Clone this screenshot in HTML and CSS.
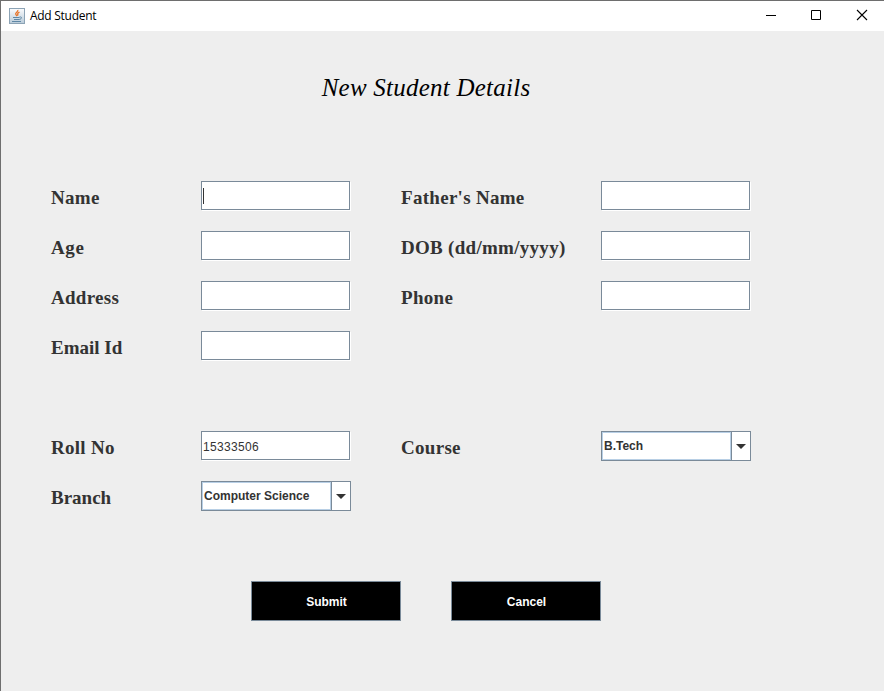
FILE: index.html
```html
<!DOCTYPE html>
<html lang="en">
<head>
<meta charset="utf-8">
<title>Add Student</title>
<link rel="stylesheet" href="styles.css">
</head>
<body>
<div class="window">
  <header class="titlebar">
    <svg class="app-icon" width="16" height="16" viewBox="0 0 16 16">
      <defs><linearGradient id="tile" x1="0" y1="0" x2="0" y2="1"><stop offset="0" stop-color="#fbfcfd"/><stop offset="1" stop-color="#b9cbd9"/></linearGradient></defs>
      <rect x=".5" y=".5" width="15" height="15" fill="url(#tile)" stroke="#8ca3b5"/>
      <path d="M8.800 2c.6 2-3 2.700-2 4.500l1.200 1.500M10.500 4.200c-1.800.8-2.500 1.700-1.300 3.300" fill="none" stroke="#e8752a" stroke-width="1.300"/>
      <path d="M4 9.500h6.500M5 11.500h5M3 13.500h9M10.500 9c3-.5 2.500 2-.3 2.500" fill="none" stroke="#5f87a5"/>
    </svg>
    <span class="caption">Add Student</span>
    <div class="controls">
      <svg width="46" height="30" viewBox="0 0 46 30"><path d="M18 14.500h10" stroke="#000"/></svg>
      <svg width="46" height="30" viewBox="0 0 46 30"><path d="M17.500 9.500h9v9h-9z" fill="none" stroke="#000"/></svg>
      <svg width="46" height="30" viewBox="0 0 46 30"><path d="M17 9l10 10M27 9l-10 10" stroke="#000" stroke-width="1.100"/></svg>
    </div>
  </header>
  <main class="content">
    <h1 class="heading">New Student Details</h1>
    <div class="form">
      <span class="label">Name</span><div class="field"><i class="caret"></i></div>
      <span class="label">Father's Name</span><div class="field"></div>
      <span class="label loose">Age</span><div class="field"></div>
      <span class="label">DOB (dd/mm/yyyy)</span><div class="field"></div>
      <span class="label">Address</span><div class="field"></div>
      <span class="label">Phone</span><div class="field"></div>
      <span class="label tight">Email Id</span><div class="field"></div>
    </div>
    <div class="form course">
      <span class="label">Roll No</span><div class="field">15333506</div>
      <span class="label">Course</span>
      <div class="combo"><span class="value">B.Tech</span><span class="drop"><svg width="10" height="5" viewBox="0 0 10 5"><path d="M0 0h10L5 5z" fill="#333"/></svg></span></div>
      <span class="label tight">Branch</span>
      <div class="combo"><span class="value">Computer Science</span><span class="drop"><svg width="10" height="5" viewBox="0 0 10 5"><path d="M0 0h10L5 5z" fill="#333"/></svg></span></div>
    </div>
    <div class="actions">
      <button class="button">Submit</button>
      <button class="button">Cancel</button>
    </div>
  </main>
</div>
</body>
</html>
```
FILE: styles.css
```css
* { box-sizing: border-box; }
body { margin: 0; }
.window {
  width: 884px;
  height: 691px;
  overflow: hidden;
  background: #eee;
  border-top: 1px solid #6e6e6e;
  border-left: 1px solid #6e6e6e;
}
.titlebar {
  display: flex;
  align-items: center;
  height: 30px;
  padding-left: 8px;
  background: #fff;
}
.app-icon { margin-top: -1px; }
.caption {
  margin-left: 5px;
  font: 12px/16px "Open Sans", sans-serif;
  letter-spacing: -0.28px;
  color: #000;
}
.controls { display: flex; margin-left: auto; margin-right: -2px; }
.content { padding-left: 50px; }
.heading {
  width: 750px;
  height: 50px;
  margin: 32px 0 0;
  text-align: center;
  font: italic 25px/50px "Liberation Serif", serif;
  letter-spacing: 0.24px;
  color: #000;
}
.form {
  display: grid;
  grid-template-columns: 150px 200px 200px 150px;
  grid-auto-rows: 30px;
  row-gap: 20px;
  margin-top: 68px;
}
.course { margin-top: 70px; }
.label {
  font: bold 19px/34px "Liberation Serif", serif;
  letter-spacing: 0.29px;
  color: #333;
  white-space: nowrap;
}
.loose { letter-spacing: 0.6px; }
.tight { letter-spacing: 0; }
.field {
  display: flex;
  width: 149px;
  height: 29px;
  padding-left: 1px;
  border: 1px solid #7a8a99;
  background: #fff;
  box-shadow: 1px 1px 0 #fff;
  font: 12px/30px "Liberation Sans", sans-serif;
  letter-spacing: 0.33px;
  color: #333;
}
.caret { width: 1px; height: 16px; margin-top: 6px; background: #333; }
.combo {
  display: flex;
  width: 150px;
  height: 30px;
  border: 1px solid #7a8a99;
  background: #fff;
}
.value {
  width: 129px;
  border: 1px solid #b8cfe5;
  padding-left: 1px;
  font: bold 12px/26px "Liberation Sans", sans-serif;
  color: #333;
}
.drop {
  display: flex;
  flex: 1;
  align-items: center;
  justify-content: center;
  padding-top: 1px;
  border-left: 1px solid #7a8a99;
}
.actions { display: flex; gap: 50px; margin: 70px 0 0 200px; }
.button {
  width: 150px;
  height: 40px;
  padding: 2px 0 0 1px;
  border: 1px solid #7a8a99;
  background: #000;
  color: #fff;
  font: bold 12px/36px "Liberation Sans", sans-serif;
}
```
